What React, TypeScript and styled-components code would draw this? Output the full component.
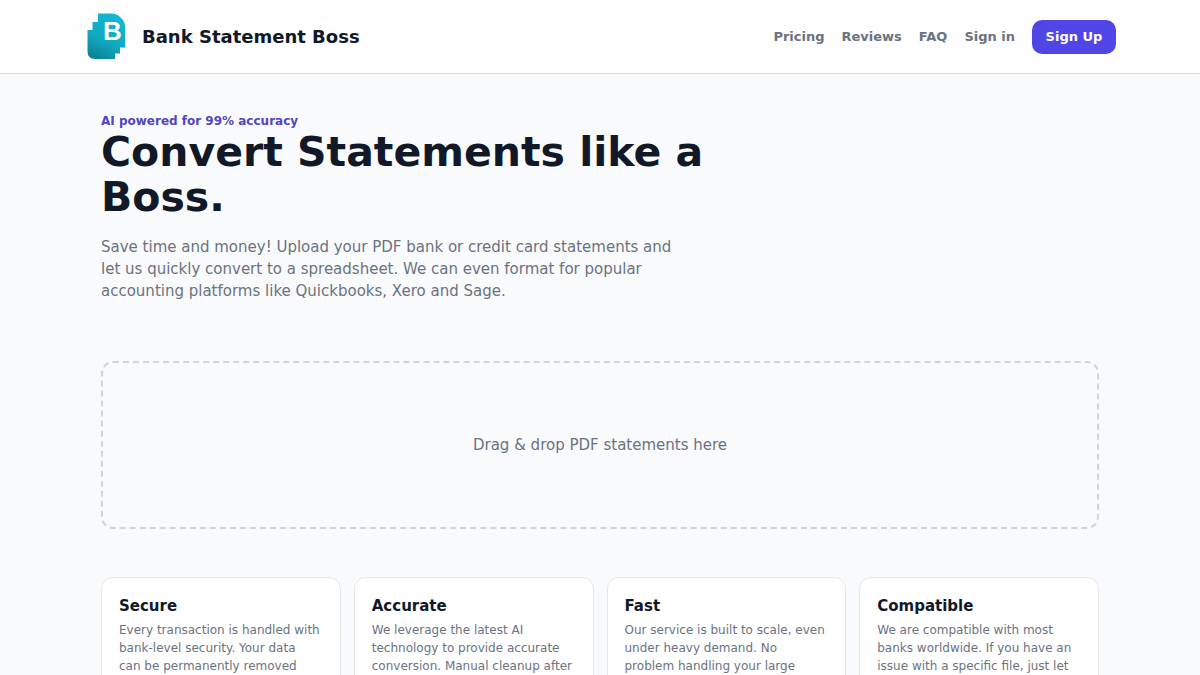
import React from "react";
import styled, { createGlobalStyle } from "styled-components";

const GlobalStyle = createGlobalStyle`
  *, *::before, *::after { box-sizing: border-box; }
  body {
    margin: 0;
    background: #f9fafc;
    color: #111827;
    font-family: "DejaVu Sans", Verdana, sans-serif;
  }
  h1, h2, p { margin: 0; }
`;

const Header = styled.header`
  background: #fefefe;
  border-bottom: 1px solid #dfe0e3;
`;

const HeaderInner = styled.div`
  display: flex;
  align-items: center;
  justify-content: space-between;
  max-width: 1062px;
  height: 73px;
  margin: 0 auto;
  padding: 0 15px 0 18px;
`;

const Brand = styled.a`
  display: flex;
  align-items: center;
  gap: 16px;
  color: #111827;
  font-size: 18px;
  font-weight: 700;
  line-height: 24px;
  text-decoration: none;
`;

const Mark = styled.svg`
  display: block;
  width: 39px;
  height: 47px;
`;

const MarkLetter = styled.text`
  font-family: "Liberation Sans", Arial, sans-serif;
  font-size: 26px;
  font-weight: 700;
  fill: #ffffff;
`;

const Nav = styled.nav`
  display: flex;
  align-items: center;
  gap: 17px;
`;

const NavLink = styled.a`
  color: #6b7280;
  font-size: 13px;
  font-weight: 700;
  line-height: 20px;
  text-decoration: none;
`;

const SignUpButton = styled.button`
  min-width: 84px;
  height: 34px;
  padding: 0 13px;
  border: 0;
  border-radius: 10px;
  background: #4f46e5;
  color: #ffffff;
  font: 700 13px/20px "DejaVu Sans", Verdana, sans-serif;
  cursor: pointer;
`;

const Main = styled.main`
  max-width: 1030px;
  margin: 0 auto;
  padding: 38px 16px 48px;
`;

const Hero = styled.section`
  max-width: 616px;
`;

const Eyebrow = styled.p`
  color: #5145c0;
  font-size: 12px;
  font-weight: 700;
  line-height: 18px;
`;

const Title = styled.h1`
  font-size: 41px;
  font-weight: 700;
  line-height: 45px;
`;

const Lede = styled.p`
  max-width: 580px;
  margin-top: 16px;
  color: #6b7280;
  font-size: 15px;
  line-height: 22px;
`;

const DropZone = styled.section`
  display: flex;
  align-items: center;
  justify-content: center;
  min-height: 168px;
  margin-top: 59px;
  border: 2px dashed #d1d5db;
  border-radius: 12px;
  color: #6b7280;
  font-size: 15px;
  line-height: 22px;
`;

const Features = styled.section`
  display: grid;
  grid-template-columns: repeat(4, 1fr);
  gap: 13px;
  margin-top: 48px;
`;

const Card = styled.article`
  padding: 17px 17px 48px;
  border: 1px solid #e5e7eb;
  border-radius: 12px;
  background: #ffffff;
`;

const CardTitle = styled.h2`
  font-size: 15px;
  font-weight: 700;
  line-height: 22px;
`;

const CardText = styled.p`
  margin-top: 4px;
  color: #6b7280;
  font-size: 12px;
  line-height: 18px;
`;

const links = ["Pricing", "Reviews", "FAQ", "Sign in"];

const features = [
  {
    title: "Secure",
    text: "Every transaction is handled with bank-level security. Your data can\u00a0be\u00a0permanently removed",
  },
  {
    title: "Accurate",
    text: "We leverage the latest AI technology to provide accurate conversion. Manual cleanup after",
  },
  {
    title: "Fast",
    text: "Our service is built to scale, even under heavy demand. No problem handling your large",
  },
  {
    title: "Compatible",
    text: "We are compatible with most banks worldwide. If you have an issue with a specific file, just let",
  },
];

function Logo() {
  return (
    <Mark viewBox="0 0 39 47" aria-hidden="true">
      <defs>
        <linearGradient id="mark" x1="0.7" y1="0" x2="0.3" y2="1">
          <stop offset="0" stopColor="#14b8d2" />
          <stop offset="0.6" stopColor="#10a9c0" />
          <stop offset="1" stopColor="#0d8497" />
        </linearGradient>
      </defs>
      <path
        d="M11 0.5H25C30 0.5 38 6 38 13V34.5H33V40.500H28V46H8Q0.500 46 0.500 38V17H5.500V9H11Z"
        fill="url(#mark)"
      />
      <MarkLetter x="16" y="27">B</MarkLetter>
    </Mark>
  );
}

export default function App() {
  return (
    <>
      <GlobalStyle />
      <Header>
        <HeaderInner>
          <Brand href="#">
            <Logo />
            <span>Bank Statement Boss</span>
          </Brand>
          <Nav aria-label="Main">
            {links.map((label) => (
              <NavLink key={label} href="#">
                {label}
              </NavLink>
            ))}
            <SignUpButton type="button">Sign Up</SignUpButton>
          </Nav>
        </HeaderInner>
      </Header>
      <Main>
        <Hero>
          <Eyebrow>AI powered for 99% accuracy</Eyebrow>
          <Title>Convert Statements like a Boss.</Title>
          <Lede>
            Save time and money! Upload your PDF bank or credit card statements
            and let us quickly convert to a spreadsheet. We can even format for
            popular accounting platforms like Quickbooks, Xero and Sage.
          </Lede>
        </Hero>
        <DropZone>Drag &amp; drop PDF statements here</DropZone>
        <Features>
          {features.map((feature) => (
            <Card key={feature.title}>
              <CardTitle>{feature.title}</CardTitle>
              <CardText>{feature.text}</CardText>
            </Card>
          ))}
        </Features>
      </Main>
    </>
  );
}
